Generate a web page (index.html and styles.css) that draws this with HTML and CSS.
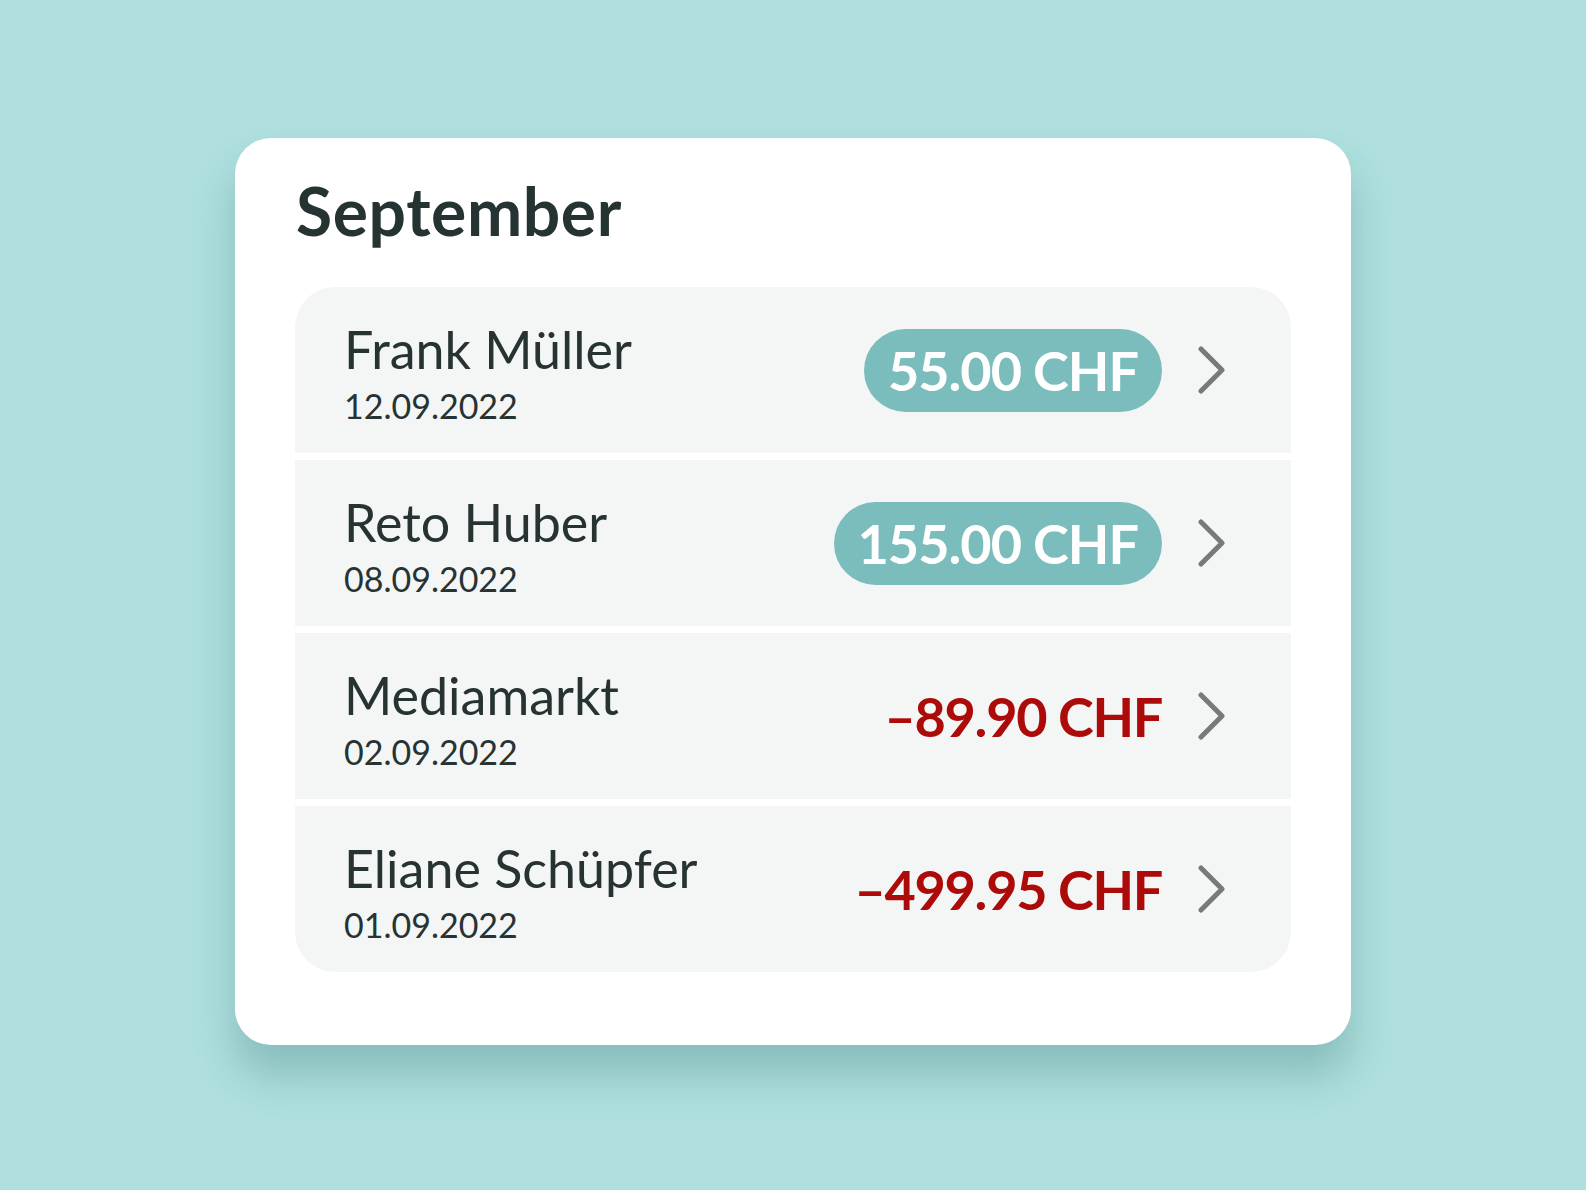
FILE: index.html
```html
<!DOCTYPE html>
<html lang="de">
<head>
<meta charset="utf-8">
<title>September</title>
<link rel="stylesheet" href="styles.css">
</head>
<body>
<main class="page">
  <section class="card">
    <h1 class="month">September</h1>
    <ul class="list">
      <li class="row">
        <div class="info">
          <span class="name">Frank Müller</span>
          <span class="date">12.09.2022</span>
        </div>
        <span class="amount pill">55.00 CHF</span>
        <svg class="chev" viewBox="0 0 28 48" width="28" height="48"><path d="M3 3 L24 24 L3 45" fill="none" stroke="#777a7a" stroke-width="5" stroke-linecap="round" stroke-linejoin="round"/></svg>
      </li>
      <li class="row">
        <div class="info">
          <span class="name">Reto Huber</span>
          <span class="date">08.09.2022</span>
        </div>
        <span class="amount pill">155.00 CHF</span>
        <svg class="chev" viewBox="0 0 28 48" width="28" height="48"><path d="M3 3 L24 24 L3 45" fill="none" stroke="#777a7a" stroke-width="5" stroke-linecap="round" stroke-linejoin="round"/></svg>
      </li>
      <li class="row">
        <div class="info">
          <span class="name">Mediamarkt</span>
          <span class="date">02.09.2022</span>
        </div>
        <span class="amount neg">–89.90 CHF</span>
        <svg class="chev" viewBox="0 0 28 48" width="28" height="48"><path d="M3 3 L24 24 L3 45" fill="none" stroke="#777a7a" stroke-width="5" stroke-linecap="round" stroke-linejoin="round"/></svg>
      </li>
      <li class="row">
        <div class="info">
          <span class="name">Eliane Schüpfer</span>
          <span class="date">01.09.2022</span>
        </div>
        <span class="amount neg">–499.95 CHF</span>
        <svg class="chev" viewBox="0 0 28 48" width="28" height="48"><path d="M3 3 L24 24 L3 45" fill="none" stroke="#777a7a" stroke-width="5" stroke-linecap="round" stroke-linejoin="round"/></svg>
      </li>
    </ul>
  </section>
</main>
</body>
</html>
```

FILE: styles.css
```css
* { box-sizing: border-box; }
html, body {
  margin: 0;
  padding: 0;
  background: #afdfdf;
}
body {
  font-family: Lato, "Open Sans", sans-serif;
  width: 1586px;
  height: 1190px;
  overflow: hidden;
}
.page {
  display: flex;
  justify-content: center;
  padding-top: 138px;
}
.card {
  width: 1116px;
  height: 907px;
  background: #ffffff;
  border-radius: 36px;
  padding: 28px 60px 0 60px;
  box-shadow: 0 30px 40px rgba(40, 100, 100, 0.28);
}
.month {
  margin: 0 0 0 1px;
  font-size: 66px;
  line-height: 90px;
  font-weight: 700;
  letter-spacing: 0.6px;
  color: #253333;
  height: 121px;
}
.list {
  list-style: none;
  margin: 0;
  padding: 0;
  border-radius: 40px;
  overflow: hidden;
  display: flex;
  flex-direction: column;
  gap: 7px;
}
.row {
  height: 166px;
  background: #f4f6f6;
  display: flex;
  align-items: center;
  padding: 0 65px 0 49px;
}
.info {
  display: flex;
  flex-direction: column;
  flex: 1;
  gap: 8px;
  padding-top: 8px;
}
.name {
  font-size: 52px;
  line-height: 56px;
  color: #273333;
  font-weight: 400;
}
.date {
  font-size: 34px;
  line-height: 42px;
  color: #273333;
}
.amount {
  font-size: 54px;
  font-weight: 700;
  letter-spacing: -1px;
  line-height: 83px;
}
.pill {
  background: #7bbdbd;
  color: #ffffff;
  border-radius: 42px;
  padding: 0 24px 0 24px;
  height: 83px;
}
.neg {
  color: #ad0a0a;
  letter-spacing: -1.3px;
}
.chev {
  margin-left: 36px;
  display: block;
}
```
